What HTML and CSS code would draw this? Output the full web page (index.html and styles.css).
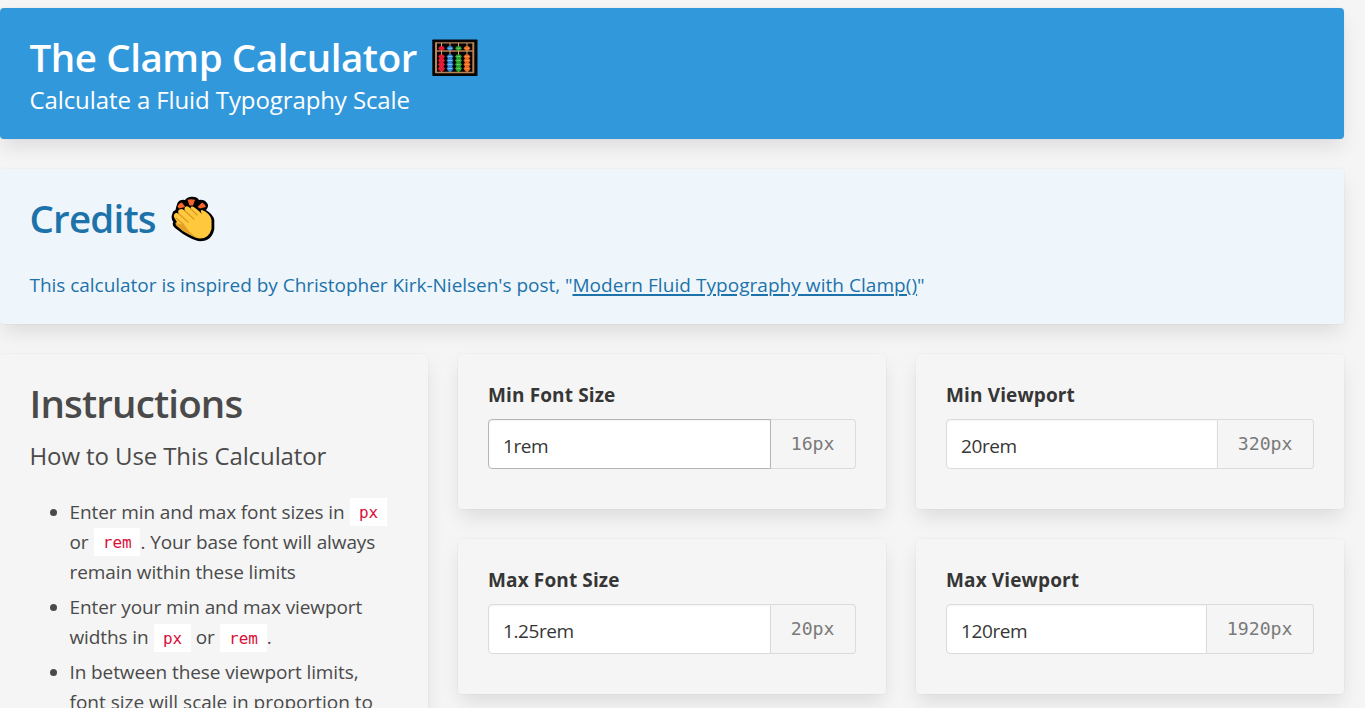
FILE: index.html
```html
<!DOCTYPE html>
<html lang="en">
<head>
<meta charset="utf-8">
<title>The Clamp Calculator</title>
<link rel="stylesheet" href="styles.css">
</head>
<body>
<main class="page">
  <header class="box hero">
    <h1 class="title hero-title"><span>The Clamp Calculator</span>
      <svg class="abacus" viewBox="0 0 46 38" width="46" height="38">
        <rect x=".3" y=".5" width="45.200" height="36.500" rx=".8" fill="#050505"/>
        <path d="M3.500 3.800H42M4 12H41M3.500 33.500H42" stroke="#b98255" stroke-width="1.300"/>
        <path d="M4 3.500V34M41.300 3.500V34" stroke="#b98255" stroke-width="2"/>
        <path d="M9.500 4V33M18 4V33M26.500 4V33M35 4V33" stroke="#d7a377" stroke-width="1"/>
        <g fill="#e31b35"><path id="red" d="M7.800 7.300H11.200L13 9.300L11.200 11.200H7.800L6 9.300Z"/><path d="M8 15.500H11L13 17.500L11.500 19.500L13 21.500L11.500 23.500L13 25.500L11.500 27.500L13 29.500L11 32.500H8L6 29.500L7.500 27.500L6 25.500L7.500 23.500L6 21.500L7.500 19.500L6 17.500Z"/></g>
        <g fill="#2d86d6" transform="translate(8.500)"><path d="M7.800 7.300H11.200L13 9.300L11.200 11.200H7.800L6 9.300Z"/><path d="M8 15.500H11L13 17.500L11.500 19.500L13 21.500L11.500 23.500L13 25.500L11.500 27.500L13 29.500L11 32.500H8L6 29.500L7.500 27.500L6 25.500L7.500 23.500L6 21.500L7.500 19.500L6 17.500Z"/></g>
        <g fill="#28a12d" transform="translate(17)"><path d="M7.800 7.300H11.200L13 9.300L11.200 11.200H7.800L6 9.300Z"/><path d="M8 15.500H11L13 17.500L11.500 19.500L13 21.500L11.500 23.500L13 25.500L11.500 27.500L13 29.500L11 32.500H8L6 29.500L7.500 27.500L6 25.500L7.500 23.500L6 21.500L7.500 19.500L6 17.500Z"/></g>
        <g fill="#ef6a20" transform="translate(25.500)"><path d="M7.800 7.300H11.200L13 9.300L11.200 11.200H7.800L6 9.300Z"/><path d="M8 15.500H11L13 17.500L11.500 19.500L13 21.500L11.500 23.500L13 25.500L11.500 27.500L13 29.500L11 32.500H8L6 29.500L7.500 27.500L6 25.500L7.500 23.500L6 21.500L7.500 19.500L6 17.500Z"/></g>
        <path d="M16.200 9.300H19.800M16.200 17.500H19.800M16.200 21.500H19.800M16.200 25.500H19.800M16.200 29.500H19.800" stroke="#83c3f5"/>
        <path d="M24.700 9.300H28.300M24.700 17.500H28.300M24.700 21.500H28.300M24.700 25.500H28.300M24.700 29.500H28.300" stroke="#65d45f"/>
        <path d="M33.200 9.300H36.800M33.200 17.500H36.800M33.200 21.500H36.800M33.200 25.500H36.800M33.200 29.500H36.800" stroke="#ff9354"/>
      </svg>
    </h1>
    <p class="subtitle hero-subtitle">Calculate a Fluid Typography Scale</p>
  </header>

  <section class="box credits">
    <h2 class="title credits-title"><span>Credits</span>
      <svg class="clap" viewBox="0 0 44 46" width="44" height="46">
        <path d="M4.500 14Q5 11 6.500 7Q9 3 14 4Q17 .5 21 .7Q26 .5 28 4Q33 3 36 7Q38.500 10 35 14Q42.500 19 43.300 24V33Q41 45.300 29 45.300Q24 45.300 12 38L4 32Q.5 29 2.300 26Q-.5 22 1.300 18Q1.500 15 4.500 14Z" fill="#000"/>
        <path d="M6.500 10.500Q8 7 11 6.500L14.300 11L8 12.500ZM16.500 3.800Q20 2.500 24 3.800L22 9.500H18.500ZM26.500 11L31 6.500Q34 7.500 35 11L29 12.500Z" fill="#f7642b"/>
        <path d="M3.500 18Q5 16 8 18Q6 15 8.500 13.500Q11 12 14 15Q12.500 12 15 10.500Q17 9.500 20 13Q19 10 21.500 10.500Q24 11 31 18Q28.500 14 31 14Q39 17 40.500 24V33Q38 42.500 29 42.500Q24.500 42.500 12 35L6 30Q3 27 6 26L4 23Q2 20 3.500 18Z" fill="#ffc83d"/>
        <path d="M8 18L17 26M14 15L23 23M20 13L26 19M5 22L13 29" fill="none" stroke="#dc9b29" stroke-width="1.300" stroke-linecap="round"/>
        <path d="M5 27Q13 28 15 31Q20 39 28 42.500Q22 41 12 35L6 30Q4 28 5 27Z" fill="#e0a026"/>
      </svg>
    </h2>
    <p class="credits-text"><span class="credits-lead">This calculator is inspired by Christopher Kirk-Nielsen's post, "</span><a class="credits-link" href="#">Modern Fluid Typography with Clamp()</a>"</p>
  </section>

  <div class="columns">
    <section class="box instructions">
      <h2 class="title instructions-title">Instructions</h2>
      <p class="subtitle instructions-subtitle">How to Use This Calculator</p>
      <ul class="steps">
        <li class="step">Enter min and max font sizes in <code class="code raised">px</code><br>or <code class="code raised">rem</code>. Your base font will always<br>remain within these limits</li>
        <li class="step">Enter your min and max viewport<br>widths in <code class="code">px</code> or <code class="code">rem</code>.</li>
        <li class="step">In between these viewport limits,<br><span class="last-line">font size will scale in proportion to</span></li>
      </ul>
    </section>
    <div class="fields">
      <section class="box field">
        <label class="label" for="min-font">Min Font Size</label>
        <div class="addons"><input class="input hovered" id="min-font" value="1rem"><span class="unit">16px</span></div>
      </section>
      <section class="box field">
        <label class="label" for="max-font">Max Font Size</label>
        <div class="addons"><input class="input" id="max-font" value="1.25rem"><span class="unit">20px</span></div>
      </section>
    </div>
    <div class="fields">
      <section class="box field">
        <label class="label" for="min-view">Min Viewport</label>
        <div class="addons"><input class="input" id="min-view" value="20rem"><span class="unit">320px</span></div>
      </section>
      <section class="box field">
        <label class="label" for="max-view">Max Viewport</label>
        <div class="addons"><input class="input" id="max-view" value="120rem"><span class="unit">1920px</span></div>
      </section>
    </div>
  </div>
</main>
</body>
</html>
```
FILE: styles.css
```css
* { box-sizing: border-box; }
html { background: #f5f5f5; overflow: hidden; }
body {
  margin: 0;
  height: 708px;
  overflow: hidden;
  color: #4a4a4a;
  font: 19px/30px "Open Sans", "Noto Sans", sans-serif;
}
h1, h2, p, ul { margin: 0; }
.page { width: 1344px; padding-top: 8px; display: flex; flex-direction: column; gap: 30px; }
.box {
  background: #f5f5f5;
  border-radius: 4px;
  padding: 30px;
  box-shadow: 0 10px 20px -2.5px rgba(10, 10, 10, .1), 0 0 0 1px rgba(10, 10, 10, .02);
}
.title { display: flex; font-size: 38.5px; line-height: 45px; font-weight: 600; white-space: nowrap; }
.subtitle { font-size: 24px; line-height: 31px; white-space: nowrap; letter-spacing: -.1px; }
.hero { height: 131px; background: #3298dc; color: #fff; padding: 27px 29.5px; }
.hero-title { gap: 15px; letter-spacing: -.43px; }
.abacus { margin-top: 4px; }
.hero-subtitle { margin-top: 4px; }
.credits { height: 155px; background: #eef6fc; color: #1d72aa; padding: 27px 29.5px; }
.credits-title { gap: 15px; letter-spacing: -.8px; }
.credits-text { margin-top: 28px; white-space: nowrap; }
.credits-lead { letter-spacing: -.03px; }
.credits-link { color: inherit; text-decoration: underline; text-decoration-thickness: 2px; text-underline-offset: 2px; letter-spacing: .05px; }
.columns { display: grid; grid-template-columns: repeat(3, 428px); gap: 30px; }
.instructions { height: 370px; padding: 27px 29.5px 0; }
.instructions-title { letter-spacing: -.85px; }
.instructions-subtitle { margin-top: 14px; }
.steps { padding: 0 0 0 40px; margin-top: 26px; letter-spacing: -.1px; white-space: nowrap; }
.step + .step { margin-top: 5px; }
.last-line { letter-spacing: 0; }
.code { background: #fff; color: #da1039; font: 16px/20px "DejaVu Sans Mono", monospace; letter-spacing: 0; padding: 5px 8.7px 4px; margin-left: .8px; }
.raised { vertical-align: 1px; line-height: 16px; }
.fields { display: flex; flex-direction: column; gap: 30px; }
.field { height: 155px; padding-top: 26px; }
.label { display: block; color: #363636; font-weight: 700; letter-spacing: .13px; margin-bottom: 9px; }
.addons { display: flex; height: 50px; }
.input {
  flex: 1;
  min-width: 0;
  border: 1px solid #dbdbdb;
  border-radius: 4px 0 0 4px;
  background: #fff;
  box-shadow: inset 0 1px 2px rgba(10, 10, 10, .05);
  color: #363636;
  font: 19px/30px "Open Sans", sans-serif;
  letter-spacing: -.4px;
  padding: 4px 14px 0;
}
.hovered { border-color: #b5b5b5; }
.unit {
  border: 1px solid #dbdbdb;
  border-left: 0;
  border-radius: 0 4px 4px 0;
  color: #7a7a7a;
  font: 18.2px/48px "DejaVu Sans Mono", monospace;
  padding: 0 20.5px 0 19.5px;
}
```
